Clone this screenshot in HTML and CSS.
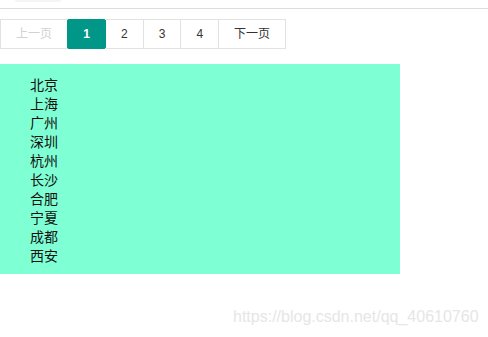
FILE: index.html
```html
<!DOCTYPE html>
<html lang="zh">
<head>
<meta charset="utf-8">
<title>laypage</title>
<link rel="stylesheet" href="styles.css">
</head>
<body>
<div class="topbar"><span class="tab-stub"></span></div>
<div class="laypage">
  <a class="page prev disabled">上一页</a>
  <span class="page curr">1</span>
  <a class="page">2</a>
  <a class="page">3</a>
  <a class="page">4</a>
  <a class="page next">下一页</a>
</div>
<ul class="cities">
  <li>北京</li>
  <li>上海</li>
  <li>广州</li>
  <li>深圳</li>
  <li>杭州</li>
  <li>长沙</li>
  <li>合肥</li>
  <li>宁夏</li>
  <li>成都</li>
  <li>西安</li>
</ul>
<div class="watermark">https://blog.csdn.net/qq_40610760</div>
</body>
</html>
```
FILE: styles.css
```css
html, body {
  margin: 0;
  padding: 0;
  background: #fff;
  font-family: "Liberation Sans", "Noto Sans CJK SC", sans-serif;
}
.topbar {
  height: 8px;
  border-bottom: 1px solid #dcdcdc;
  position: relative;
}
.tab-stub {
  position: absolute;
  left: 15px;
  top: 0;
  width: 46px;
  height: 2px;
  background: #f4f4f4;
  border-radius: 0 0 6px 6px;
}
.laypage {
  display: flex;
  margin-top: 10px;
  height: 30px;
}
.page {
  display: block;
  box-sizing: border-box;
  height: 30px;
  line-height: 28px;
  padding: 0 15px;
  border: 1px solid #e2e2e2;
  border-left: none;
  font-size: 12px;
  color: #333;
  background: #fff;
}
.prev {
  border-left: 1px solid #e2e2e2;
}
.disabled {
  color: #d2d2d2;
}
.curr {
  background: #009688;
  border-color: #009688;
  color: #fff;
  font-weight: bold;
  border-radius: 2px;
  width: 39px;
  margin-left: -1px;
  padding: 0;
  text-align: center;
  border-left: 1px solid #009688;
}
.cities {
  list-style: none;
  margin: 15px 0 0;
  padding: 11px 0 9px 30px;
  width: 370px;
  background: #7fffd4;
  font-family: "Noto Sans CJK SC", sans-serif;
  font-size: 14px;
  line-height: 19px;
  color: #111;
}
.watermark {
  position: absolute;
  left: 233px;
  top: 308px;
  font-size: 16px;
  color: #e6e6e6;
  font-family: "Liberation Sans", sans-serif;
  white-space: nowrap;
}
```
